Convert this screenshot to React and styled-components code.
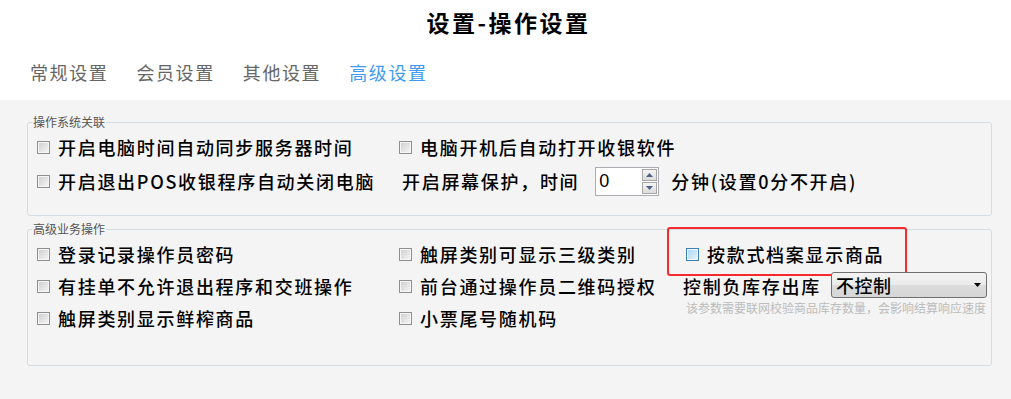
import React from "react";
import styled, { createGlobalStyle, css } from "styled-components";

const Global = createGlobalStyle`
  html, body { margin: 0; padding: 0; background: #f4f4f4; }
  body { font-family: "Noto Sans CJK SC", "Noto Sans", sans-serif; color: #000; }
  * { box-sizing: border-box; }
`;

const Page = styled.div`
  width: 1011px;
  min-height: 399px;
  background: #f4f4f4;
`;

const Header = styled.header`
  background: #fff;
  height: 100px;
`;

const Title = styled.h1`
  margin: 0;
  height: 44px;
  line-height: 44px;
  text-align: center;
  font-size: 23px;
  font-weight: 700;
  letter-spacing: 2.5px;
  padding-left: 6px;
  color: #000;
`;

const Tabs = styled.nav`
  display: flex;
  gap: 28px;
  padding-left: 30px;
  height: 56px;
  align-items: center;
`;

const Tab = styled.span`
  font-size: 18px;
  letter-spacing: 1.6px;
  line-height: 24px;
  color: ${(p) => (p.$active ? "#3f9bf2" : "#666")};
`;

const Content = styled.main`
  padding-top: 16px;
`;

const Group = styled.fieldset`
  margin: ${(p) => p.$top || 0}px 19px 0 27px;
  padding: ${(p) => p.$pt}px 9px ${(p) => p.$pb}px;
  border: 1px solid #d3dde6;
  border-radius: 3px;
  min-width: 0;
`;

const Legend = styled.legend`
  font-size: 12px;
  line-height: 12px;
  color: #555;
  padding: 0 1px;
  margin-left: -5px;
`;

const Grid = styled.div`
  display: grid;
  grid-template-columns: 362px 284px 1fr;
  grid-auto-rows: ${(p) => p.$row}px;
`;

const Item = styled.div`
  position: relative;
  display: flex;
  align-items: center;
  gap: 8px;
  padding-left: ${(p) => p.$pl || 0}px;
  font-size: 18px;
  font-weight: 500;
  letter-spacing: 1.7px;
  white-space: nowrap;

  ${(p) =>
    p.$highlight &&
    css`
      &::after {
        content: "";
        position: absolute;
        left: -16px;
        top: -11px;
        width: 236px;
        height: 45px;
        border: 2px solid #f52a2a;
        border-radius: 3px;
        pointer-events: none;
      }
    `}
`;

const Box = styled.span`
  flex: none;
  width: 13px;
  height: 13px;
  border: 1px solid ${(p) => (p.$hover ? "#3c7fb1" : "#8f8f8f")};
  box-shadow: inset 0 0 0 1px #f6f6f6;
  background: ${(p) =>
    p.$hover
      ? "linear-gradient(135deg, #a9d6f5 0%, #e6f3fc 100%)"
      : "linear-gradient(135deg, #cdcdcd 0%, #f7f7f7 100%)"};
`;

const Label = styled.span`
  line-height: 24px;
`;

const Spinner = styled.div`
  display: flex;
  width: 64px;
  height: 29px;
  margin: 0 12px 0 16px;
  padding: 1px 1px 1px 3px;
  border: 1px solid #abadb3;
  background: #fff;
`;

const SpinValue = styled.span`
  flex: 1;
  font-family: "Liberation Sans", sans-serif;
  font-size: 18px;
  font-weight: 400;
  letter-spacing: 0;
  line-height: 24px;
`;

const SpinButtons = styled.div`
  display: flex;
  flex-direction: column;
  width: 15px;
  gap: 1px;
`;

const SpinButton = styled.span`
  flex: 1;
  display: flex;
  align-items: center;
  justify-content: center;
  border: 1px solid #a6a6a6;
  background: linear-gradient(#f4f4f4, #dcdcdc);
`;

const Select = styled.div`
  display: flex;
  align-items: center;
  justify-content: space-between;
  width: 156px;
  height: 26px;
  margin: -3px 0 0 2px;
  padding: 0 5px 0 4px;
  border: 1px solid #707070;
  border-radius: 3px;
  background: linear-gradient(#f3f3f3 0%, #ebebeb 50%, #dcdcdc 51%, #d6d6d6 100%);
  font-size: 18px;
  letter-spacing: 0.5px;
`;

const Hint = styled.div`
  font-size: 12px;
  font-weight: 400;
  line-height: 12px;
  letter-spacing: 0;
  color: #bcbcbc;
  white-space: nowrap;
  padding-left: 3px;
`;

const Arrow = ({ up }) => (
  <svg width="7" height="4" viewBox="0 0 7 4">
    <path d={up ? "M0 4 L3.5 0 L7 4 Z" : "M0 0 L3.5 4 L7 0 Z"} fill="#4d6185" />
  </svg>
);

const Check = ({ children, pl, hover, highlight }) => (
  <Item $pl={pl} $highlight={highlight}>
    <Box $hover={hover} />
    <Label>{children}</Label>
  </Item>
);

export default function App() {
  return (
    <Page>
      <Global />
      <Header>
        <Title>设置-操作设置</Title>
        <Tabs>
          <Tab>常规设置</Tab>
          <Tab>会员设置</Tab>
          <Tab>其他设置</Tab>
          <Tab $active>高级设置</Tab>
        </Tabs>
      </Header>
      <Content>
        <Group $pt={2} $pb={17}>
          <Legend>操作系统关联</Legend>
          <Grid $row={34}>
            <Check>开启电脑时间自动同步服务器时间</Check>
            <Check>电脑开机后自动打开收银软件</Check>
            <div />
            <Check>开启退出POS收银程序自动关闭电脑</Check>
            <Item $pl={3} style={{ gridColumn: "2 / 4", gap: 0 }}>
              <Label>开启屏幕保护，时间</Label>
              <Spinner>
                <SpinValue>0</SpinValue>
                <SpinButtons>
                  <SpinButton>
                    <Arrow up />
                  </SpinButton>
                  <SpinButton>
                    <Arrow />
                  </SpinButton>
                </SpinButtons>
              </Spinner>
              <Label>分钟(设置0分不开启)</Label>
            </Item>
          </Grid>
        </Group>
        <Group $top={7} $pt={3} $pb={31}>
          <Legend>高级业务操作</Legend>
          <Grid $row={32}>
            <Check>登录记录操作员密码</Check>
            <Check>触屏类别可显示三级类别</Check>
            <Check pl={3} hover highlight>
              按款式档案显示商品
            </Check>
            <Check>有挂单不允许退出程序和交班操作</Check>
            <Check>前台通过操作员二维码授权</Check>
            <Item>
              <Label>控制负库存出库</Label>
              <Select>
                <span>不控制</span>
                <svg width="7" height="4" viewBox="0 0 7 4">
                  <path d="M0 0 L3.5 4 L7 0 Z" fill="#000" />
                </svg>
              </Select>
            </Item>
            <Check>触屏类别显示鲜榨商品</Check>
            <Check>小票尾号随机码</Check>
            <Hint>该参数需要联网校验商品库存数量，会影响结算响应速度</Hint>
          </Grid>
        </Group>
      </Content>
    </Page>
  );
}
